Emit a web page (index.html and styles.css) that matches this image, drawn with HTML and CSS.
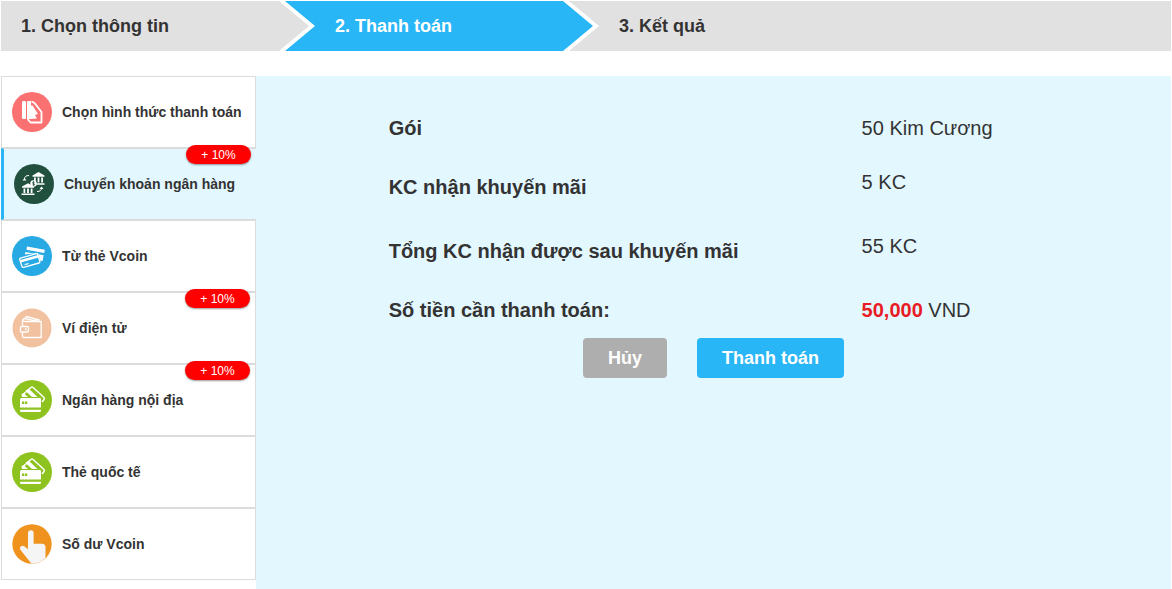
FILE: index.html
```html
<!DOCTYPE html>
<html lang="vi">

<head>
    <meta charset="UTF-8">
    <meta name="viewport" content="width=device-width, initial-scale=1.0">
    <title>Thanh toán</title>
    <link rel="stylesheet" href="styles.css">
</head>

<body>
    <!-- credit card icon, used twice in the menu -->
    <svg class="sprite" aria-hidden="true">
        <symbol id="icon-cards" viewBox="0 0 40 40">
            <circle cx="20" cy="20" r="20" fill="#8dc21f" />
            <path d="M10 15.500L19.200 7.300Q20 6.600 20.800 7.300L32 17.500Q32.700 18.500 32 19.500L30 22" fill="none" stroke="#fff" stroke-width="1.500" />
            <path d="M13.500 11l3-2.500 9 8.500h-5.500zM9.500 14.500l2-1.500 4.500 4h-6z" fill="#fff" />
            <path d="M9.500 18H28q1 0 1 1v8.500H8V19.500q0-1.500 1.500-1.500z" fill="#fff" />
            <path d="M8 29.700h21v.8q0 1.500-1.500 1.500h-18Q8 32 8 30.500z" fill="#fff" />
            <path d="M10 21.500h2.300v2.500H10zM13 21.500h2.300v2.500H13z" fill="#8dc21f" />
        </symbol>
    </svg>

    <ol class="steps">
        <li class="step step-first">1. Chọn thông tin</li>
        <li class="step step-active" aria-current="step">2. Thanh toán</li>
        <li class="step step-last">3. Kết quả</li>
    </ol>

    <div class="content">
        <nav class="methods">
            <a class="method" href="#">
                <svg class="icon" viewBox="0 0 40 40" aria-hidden="true">
                    <circle cx="20" cy="20" r="20" fill="#fb7172" />
                    <rect x="10" y="9" width="4" height="18" rx="1.300" fill="#fff" />
                    <path d="M15 10q0-1 1-1h3v18h-4z" fill="#fff" />
                    <path d="M19 13.500l1.500 0 5.500 8.500-3 1 2 3.500-6 .5z" fill="#fff" />
                    <path d="M19.500 9.500l3 1.500 7 9v10.500H18.500L15.500 27" fill="none" stroke="#fff" stroke-width="1.800" stroke-linejoin="round" />
                </svg>
                <span>Chọn hình thức thanh toán</span>
            </a>
            <a class="method method-active" href="#">
                <svg class="icon" viewBox="0 0 40 40" aria-hidden="true">
                    <circle cx="20" cy="20" r="20" fill="#21503f" />
                    <g fill="#fff">
                        <path d="M18.500 11.500L24.500 8l6 3.500v1.300h-12zM20 13.500h1.800v5H20zM23.600 13.500h1.800v5h-1.800zM27.200 13.500H29v5h-1.800zM22 19.200h8.500v1.500H22z" />
                        <path d="M8 22.500l6-3.300 6 3.300v1.300H8zM9.500 24.500h1.800v4.500H9.500zM13.100 24.500h1.800v4.500h-1.800zM16.700 24.500h1.800v4.500h-1.800zM7.500 29.600h13v1.500h-13z" />
                        <circle cx="19.500" cy="19.500" r="3.200" />
                        <path d="M12.500 16.500H8.500l2-2.500zM25.500 25h4l-2-2.500z" />
                    </g>
                    <path d="M10.500 15q0-3.500 4.500-3.500M27.500 24q0 3.500-4.500 3.500" fill="none" stroke="#fff" />
                    <path d="M20.500 18.200q-2-.8-2 .4t1.300 1q1.200.3.900 1.100t-2.200.2M19.500 17.300v4.400" fill="none" stroke="#21503f" stroke-width=".8" />
                </svg>
                <span>Chuyển khoản ngân hàng</span>
                <span class="badge">+ 10%</span>
            </a>
            <a class="method" href="#">
                <svg class="icon" viewBox="0 0 40 40" aria-hidden="true">
                    <circle cx="20" cy="20" r="20" fill="#27a9e3" />
                    <path d="M15 10.500l17.800 3.300-.6 3.200-17.700-3.300z" fill="#fff" />
                    <path d="M13.300 16l18.300 3.300-1 5.700-2.600-.5-1.800-7.500-13.300 1.500z" fill="#fff" />
                    <path d="M8.500 22.200l15.800-4.500q1.200-.3 1.500.8l2 7q.3 1.200-.8 1.500l-15.500 4.300q-1.200.3-1.500-.8l-2.200-6.800q-.4-1.200.7-1.500z" fill="#27a9e3" stroke="#fff" stroke-width="1.300" />
                    <path d="M8.200 24l17.800-5 .7 2.400-17.800 5zM12.500 28l4-1.100.3 1.200-4 1.100z" fill="#fff" />
                </svg>
                <span>Từ thẻ Vcoin</span>
            </a>
            <a class="method" href="#">
                <svg class="icon" viewBox="0 0 40 40" aria-hidden="true">
                    <circle cx="20" cy="20" r="19.500" fill="#f1c1a0" />
                    <g fill="none" stroke="#fff" stroke-width="1.300" stroke-linejoin="round">
                        <path d="M10.500 18.500V12.500q1.500 1 3.500 1h15.200v16H12q-1.500 0-1.500-1.500V24" />
                        <path d="M10.500 12.500q0-1.500 2.500-2L14.500 8.500 27 12v1.500M13 10.500l12.500 3" />
                        <path d="M9.500 18.500h5.500q1.500 0 1.500 1.500v2.500q0 1.500-1.500 1.500H9.500q-1 0-1-1v-3.500q0-1 1-1z" />
                    </g>
                    <circle cx="13.800" cy="21.300" r="1" fill="#fff" />
                </svg>
                <span>Ví điện tử</span>
                <span class="badge">+ 10%</span>
            </a>
            <a class="method" href="#">
                <svg class="icon" aria-hidden="true"><use href="#icon-cards" /></svg>
                <span>Ngân hàng nội địa</span>
                <span class="badge">+ 10%</span>
            </a>
            <a class="method" href="#">
                <svg class="icon" aria-hidden="true"><use href="#icon-cards" /></svg>
                <span>Thẻ quốc tế</span>
            </a>
            <a class="method" href="#">
                <svg class="icon" viewBox="0 0 40 40" aria-hidden="true">
                    <circle cx="20" cy="20" r="19.700" fill="#f0931e" />
                    <path d="M16 9q0-2.800 2.800-2.800T21.600 9v10.800h8.400q3.500 0 3.500 3.500v10.600A19.700 19.700 0 0 1 19.500 39.700L8.400 25.800q-1.200-1.800.3-3.200t3.500-.3l3.800 3z" fill="#f5f5f5" />
                </svg>
                <span>Số dư Vcoin</span>
            </a>
        </nav>

        <main class="panel">
            <dl class="summary">
                <div class="row">
                    <dt>Gói</dt>
                    <dd>50 Kim Cương</dd>
                </div>
                <div class="row row-bonus">
                    <dt>KC nhận khuyến mãi</dt>
                    <dd>5 KC</dd>
                </div>
                <div class="row row-bonus">
                    <dt>Tổng KC nhận được sau khuyến mãi</dt>
                    <dd>55 KC</dd>
                </div>
                <div class="row">
                    <dt>Số tiền cần thanh toán:</dt>
                    <dd><strong class="price">50,000</strong> VND</dd>
                </div>
            </dl>
            <div class="actions">
                <button class="btn btn-cancel" type="button">Hủy</button>
                <button class="btn btn-pay" type="button">Thanh toán</button>
            </div>
        </main>
    </div>
</body>

</html>
```
FILE: styles.css
```css
* {
    margin: 0;
    padding: 0;
    box-sizing: border-box;
}

body {
    display: flex;
    flex-direction: column;
    min-height: 100vh;
    padding: 1px 1px 0;
    background: #fff;
    color: #333;
    font-family: "Liberation Sans", Arial, sans-serif;
}

.sprite {
    position: absolute;
    width: 0;
    height: 0;
}

/* steps */
.steps {
    display: flex;
    margin-bottom: 25px;
    list-style: none;
}

.step {
    flex: 0 0 308px;
    padding-left: 50px;
    background: #e1e1e1;
    font-size: 18px;
    font-weight: bold;
    line-height: 50px;
    clip-path: polygon(0 0, calc(100% - 30px) 0, 100% 50%, calc(100% - 30px) 100%, 0 100%, 30px 50%);
}

.step + .step {
    margin-left: -24px;
}

.step-first {
    padding-left: 20px;
    clip-path: polygon(0 0, calc(100% - 30px) 0, 100% 50%, calc(100% - 30px) 100%, 0 100%);
}

.step-active {
    background: #29b6f6;
    color: #fff;
}

.step-last {
    flex: 1;
    clip-path: polygon(0 0, 100% 0, 100% 100%, 0 100%, 30px 50%);
}

/* payment methods */
.content {
    display: flex;
    flex: 1;
}

.methods {
    flex: 0 0 255px;
}

.method {
    position: relative;
    display: flex;
    align-items: center;
    gap: 10px;
    height: 72px;
    padding: 0 10px;
    border: 1px solid #dcdcdc;
    color: #333;
    font-size: 14px;
    font-weight: bold;
    text-decoration: none;
    white-space: nowrap;
}

.method-active {
    border-left: 3px solid #29b6f6;
    border-right: none;
    background: #e3f7ff;
}

.icon {
    flex: none;
    width: 40px;
    height: 40px;
}

.badge {
    position: absolute;
    top: -4px;
    right: 5px;
    width: 65px;
    height: 19px;
    border-radius: 10px;
    background: #f00;
    box-shadow: 0 1px 2px rgba(0, 0, 0, 0.4);
    color: #fff;
    font-size: 12px;
    font-weight: normal;
    line-height: 20px;
    text-align: center;
}

/* order summary */
.panel {
    flex: 1;
    padding: 40px 0;
    background: #e3f7ff;
}

.summary {
    padding: 0 14.5%;
    font-size: 20px;
    line-height: 24px;
}

.row {
    display: flex;
    margin-bottom: 30px;
}

.row-bonus {
    margin-bottom: 35px;
}

.row:last-child {
    margin-bottom: 16px;
}

.row dt {
    flex: 0 0 72.8%;
    font-weight: bold;
}

.row-bonus dt {
    padding-top: 5px;
}

.price {
    color: #e91c24;
}

.actions {
    display: flex;
    justify-content: center;
    gap: 30px;
}

.btn {
    height: 40px;
    padding: 0 25px;
    border: none;
    border-radius: 4px;
    color: #fff;
    font-family: inherit;
    font-size: 18px;
    font-weight: bold;
    cursor: pointer;
}

.btn-cancel {
    background: #aeaeae;
}

.btn-pay {
    background: #29b6f6;
}
```
